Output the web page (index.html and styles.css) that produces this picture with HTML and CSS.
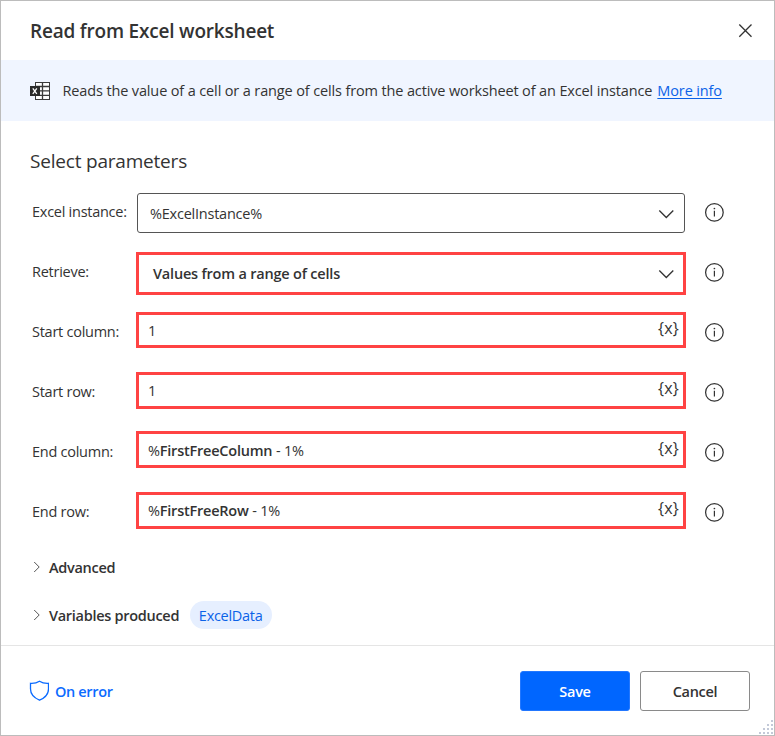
FILE: index.html
```html
<!DOCTYPE html>
<html lang="en">
<head>
<meta charset="utf-8">
<title>Read from Excel worksheet</title>
<link rel="stylesheet" href="styles.css">
</head>
<body>
<svg class="defs" width="0" height="0">
  <symbol id="info" viewBox="0 0 20 20"><circle cx="10.4" cy="10.4" r="8.8" fill="none" stroke="#333" stroke-width="1.25"/><path d="M10.4 8.7v5.8" stroke="#333" stroke-width="1.2"/><circle cx="10.4" cy="6.5" r=".85" fill="#333"/></symbol>
  <symbol id="down" viewBox="0 0 16 10"><path d="M1.3 1.5l7 7 7-7" fill="none" stroke="#333" stroke-width="1.3"/></symbol>
  <symbol id="right" viewBox="0 0 8 12"><path d="M1.2 1l5 5-5 5" fill="none" stroke="#555" stroke-width="1"/></symbol>
</svg>
<div class="dialog">
  <header class="header">
    <h1 class="title">Read from Excel worksheet</h1>
    <svg class="close" width="14" height="14" viewBox="0 0 14 14"><path d="M1.3.5l12.2 12.2M13.5.5L1.3 12.7" stroke="#333" stroke-width="1.3"/></svg>
  </header>
  <div class="banner">
    <svg class="excel" width="20" height="18" viewBox="0 0 20 18"><rect x="5.5" y=".5" width="14" height="17" fill="#fff" stroke="#3b3b3b"/><path d="M12.5 0v18M5 4.5h15M5 8.9h15M5 13.3h15" stroke="#3b3b3b" stroke-width="1.3"/><rect y="4" width="10" height="10" fill="#2b2b2b"/><path d="M2.8 6.3l4 5.5M6.8 6.3l-4 5.5" stroke="#fff" stroke-width="1.3"/></svg>
    <p class="desc"><span class="desc-text">Reads the value of a cell or a range of cells from the active worksheet of an Excel instance</span><a class="more" href="#">More info</a></p>
  </div>
  <main class="main">
    <h2 class="subtitle">Select parameters</h2>
    <div class="row"><span class="label">Excel instance:</span><div class="field combo"><span>%ExcelInstance%</span><svg width="16" height="10"><use href="#down"/></svg></div><svg class="info" width="20" height="20"><use href="#info"/></svg></div>
    <div class="row"><span class="label">Retrieve:</span><div class="field marked select"><span>Values from a range of cells</span><svg width="16" height="10"><use href="#down"/></svg></div><svg class="info" width="20" height="20"><use href="#info"/></svg></div>
    <div class="row"><span class="label">Start column:</span><div class="field marked short"><span>1</span><span class="var">{x}</span></div><svg class="info" width="20" height="20"><use href="#info"/></svg></div>
    <div class="row"><span class="label">Start row:</span><div class="field marked"><span>1</span><span class="var">{x}</span></div><svg class="info" width="20" height="20"><use href="#info"/></svg></div>
    <div class="row"><span class="label">End column:</span><div class="field marked raised"><span>%<b>FirstFreeColumn</b> - 1%</span><span class="var">{x}</span></div><svg class="info" width="20" height="20"><use href="#info"/></svg></div>
    <div class="row"><span class="label">End row:</span><div class="field marked"><span>%<b>FirstFreeRow</b> - 1%</span><span class="var">{x}</span></div><svg class="info" width="20" height="20"><use href="#info"/></svg></div>
    <div class="expander"><svg width="8" height="12"><use href="#right"/></svg><span>Advanced</span></div>
    <div class="expander"><svg width="8" height="12"><use href="#right"/></svg><span>Variables produced</span><span class="chip">ExcelData</span></div>
  </main>
  <footer class="footer">
    <div class="onerror"><svg width="20" height="21" viewBox="0 0 20 21"><path d="M10.5 1.2C8 2.8 4.5 3.5 1.5 3.3V9c0 5 3.8 8.9 9 11.2 5.2-2.3 9-6.2 9-11.2V3.3C16.5 3.5 13 2.8 10.5 1.2z" fill="none" stroke="#0b6bff" stroke-width="1.3"/></svg><span>On error</span></div>
    <button class="btn save">Save</button>
    <button class="btn cancel">Cancel</button>
  </footer>
  <svg class="grip" width="15" height="15" viewBox="0 0 15 15" fill="#c3c9d8"><path d="M12 0h2v2h-2zM12 4h2v2h-2zM12 8h2v2h-2zM12 12h2v2h-2zM8 4h2v2h-2zM8 8h2v2h-2zM8 12h2v2h-2zM4 8h2v2h-2zM4 12h2v2h-2zM0 12h2v2h-2z"/></svg>
</div>
</body>
</html>
```
FILE: styles.css
```css
* { box-sizing: border-box; }
body { margin: 0; font: 14.5px/20px "Open Sans", sans-serif; color: #333; background: #fff; }
.defs { position: absolute; }
h1, h2, p { margin: 0; font-weight: 400; }
span, a { white-space: nowrap; }
.dialog { position: relative; width: 775px; height: 736px; border: 1px solid #bcbcbc; display: flex; flex-direction: column; }
.header { height: 59px; padding: 0 22px 0 29px; display: flex; align-items: center; justify-content: space-between; }
.title { font-size: 19px; font-weight: 600; line-height: 28px; letter-spacing: -.2px; }
.banner { height: 61px; background: #f0f5ff; padding-left: 29px; display: flex; align-items: center; gap: 12.5px; }
.desc { display: flex; gap: 5px; letter-spacing: -.135px; }
.more { color: #0b62e8; text-decoration: underline; text-underline-offset: 2px; }
.main { height: 524px; padding: 26px 0 0 29px; }
.subtitle { font-size: 19px; line-height: 28px; height: 35px; letter-spacing: -.2px; }
.row { height: 60px; display: flex; align-items: flex-start; padding-left: 2px; }
.label { width: 104px; margin-top: 20px; letter-spacing: -.26px; }
.field { width: 550px; height: 37px; margin-top: 10px; padding: 1px 4px 1px 9px; display: flex; align-items: center; justify-content: space-between; letter-spacing: -.22px; }
.marked { border: 3px solid #ff4343; }
.combo { width: 548px; height: 40px; margin: 11px 1px 0; border: 1px solid #555; border-radius: 3px; padding: 1px 10px 0 12px; letter-spacing: -.23px; }
.select { height: 43px; padding: 0 9px 0 14px; font-weight: 600; letter-spacing: -.2px; }
.short { height: 36px; padding-top: 2px; }
.raised { margin-top: 9px; padding-top: 3px; }
.field b { font-weight: 600; }
.var { font-size: 16px; letter-spacing: .2px; margin-bottom: 5px; }
.info { margin: 20px 0 0 18px; }
.expander { height: 48px; display: flex; align-items: center; padding: 3px 0 0 3px; font-weight: 600; letter-spacing: -.29px; }
.expander svg { margin: 0 8px 2px 0; }
.chip { margin: 0 0 2px 11px; height: 28px; width: 82px; border-radius: 14px; background: #e6efff; color: #0b62e8; font-weight: 400; display: flex; align-items: center; justify-content: center; padding: 2px 1px 0 0; }
.footer { height: 90px; border-top: 1px solid #e5e5e5; padding: 0 24px 0 28px; display: flex; align-items: center; gap: 10px; }
.onerror { flex: 1; display: flex; align-items: center; gap: 6px; color: #0b6bff; font-weight: 600; letter-spacing: -.35px; }
.onerror span { padding-top: 2px; }
.btn { width: 110px; height: 40px; border-radius: 3px; font: 600 14.5px/20px "Open Sans", sans-serif; letter-spacing: -.3px; padding: 2px 0 0; }
.save { background: #0066ff; color: #fff; border: 1px solid #2277ff; }
.cancel { background: #fff; color: #333; border: 1px solid #8a8a8a; }
.grip { position: absolute; right: 0; bottom: 0; }
```
